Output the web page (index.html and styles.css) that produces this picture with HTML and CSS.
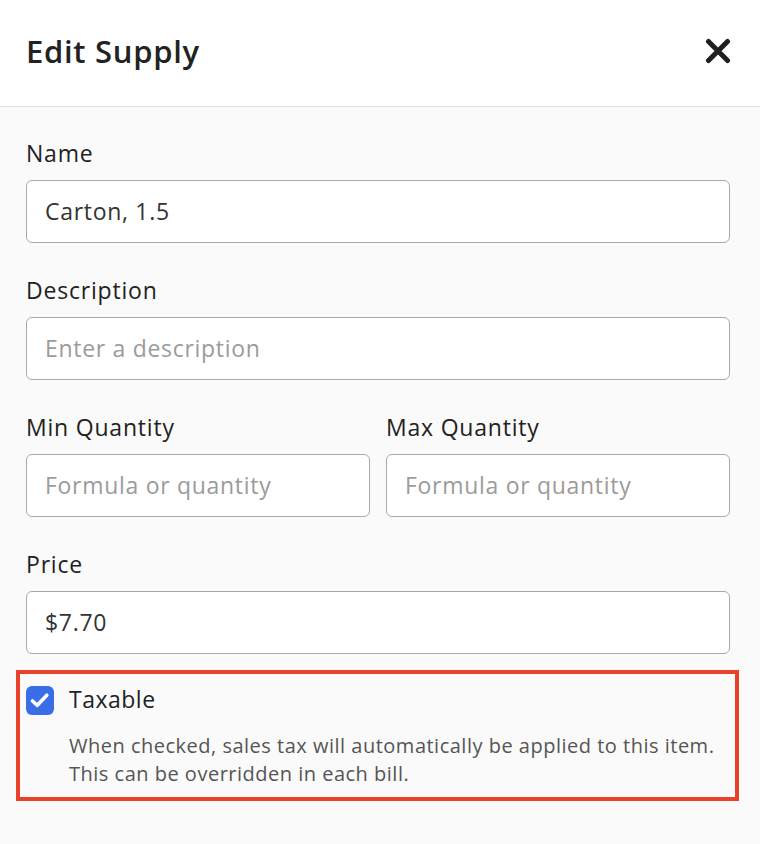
FILE: index.html
```html
<!DOCTYPE html>
<html>
<head>
<meta charset="utf-8">
<link rel="stylesheet" href="styles.css">
</head>
<body>
<div class="modal">
  <header class="header">
    <h1 class="title">Edit Supply</h1>
    <button class="close" aria-label="Close">
      <svg width="26" height="26" viewBox="0 0 26 26"><path d="M3.5 3.5 L22.5 22.5 M22.5 3.5 L3.5 22.5" stroke="#1f1f1f" stroke-width="5" stroke-linecap="round" fill="none"/></svg>
    </button>
  </header>
  <main class="body">
    <div class="field">
      <label class="label">Name</label>
      <input class="input" type="text" value="Carton, 1.5">
    </div>
    <div class="field">
      <label class="label">Description</label>
      <input class="input" type="text" placeholder="Enter a description">
    </div>
    <div class="row">
      <div class="field">
        <label class="label">Min Quantity</label>
        <input class="input" type="text" placeholder="Formula or quantity">
      </div>
      <div class="field">
        <label class="label">Max Quantity</label>
        <input class="input" type="text" placeholder="Formula or quantity">
      </div>
    </div>
    <div class="field field-last">
      <label class="label">Price</label>
      <input class="input" type="text" value="$7.70">
    </div>
    <div class="highlight">
      <div class="check-row">
        <span class="checkbox">
          <svg width="28" height="29" viewBox="0 0 28 29"><path d="M6.5 15 L11.3 19.3 L20.8 9.2" stroke="#fff" stroke-width="3.6" stroke-linecap="round" stroke-linejoin="round" fill="none"/></svg>
        </span>
        <span class="check-label">Taxable</span>
      </div>
      <p class="help">When checked, sales tax will automatically be applied to this item.<br>This can be overridden in each bill.</p>
    </div>
  </main>
</div>
</body>
</html>
```
FILE: styles.css
```css
* { box-sizing: border-box; }
html, body { margin: 0; padding: 0; }
body {
  font-family: "Open Sans", Lato, "Liberation Sans", sans-serif;
  background: #fafafa;
  color: #222;
  width: 760px;
  height: 844px;
  overflow: hidden;
}
.header {
  height: 107px;
  background: #fff;
  border-bottom: 1px solid #dedede;
  display: flex;
  align-items: center;
  justify-content: space-between;
  padding: 0 29px 4px 26px;
}
.title {
  margin: 0;
  font-size: 31px;
  font-weight: 600;
  letter-spacing: 0.7px;
  color: #222;
}
.close {
  background: none;
  border: 0;
  padding: 0;
  width: 26px;
  height: 26px;
  display: flex;
}
.body {
  padding: 33px 30px 0 26px;
}
.field {
  display: flex;
  flex-direction: column;
  margin-bottom: 34px;
}
.field-last { margin-bottom: 16px; }
.label {
  font-size: 23px;
  line-height: 27px;
  letter-spacing: 0.8px;
  margin-bottom: 13px;
  color: #222;
}
.input {
  height: 63px;
  width: 100%;
  border: 1px solid #a9a9a9;
  border-radius: 6px;
  background: #fff;
  padding: 0 18px 2px 18px;
  font-family: inherit;
  font-size: 23px;
  letter-spacing: 0.7px;
  color: #333;
  outline: none;
}
.input::placeholder { color: #9b9b9b; }
.row {
  display: grid;
  grid-template-columns: 1fr 1fr;
  column-gap: 16px;
}
.highlight {
  margin: 0 -9px 0 -10px;
  border: 4px solid #e8432a;
  padding: 12px 6px 9px 6px;
}
.check-row {
  display: flex;
  align-items: center;
  gap: 15px;
  height: 29px;
}
.checkbox {
  width: 28px;
  height: 29px;
  border-radius: 6px;
  background: #3a6ee6;
  display: flex;
}
.check-label {
  font-size: 23px;
  line-height: 29px;
  letter-spacing: 0.5px;
  color: #222;
  position: relative;
  top: -1px;
}
.help {
  margin: 17px 0 0 43px;
  font-size: 20px;
  line-height: 28px;
  letter-spacing: 0.5px;
  color: #555;
}
```
